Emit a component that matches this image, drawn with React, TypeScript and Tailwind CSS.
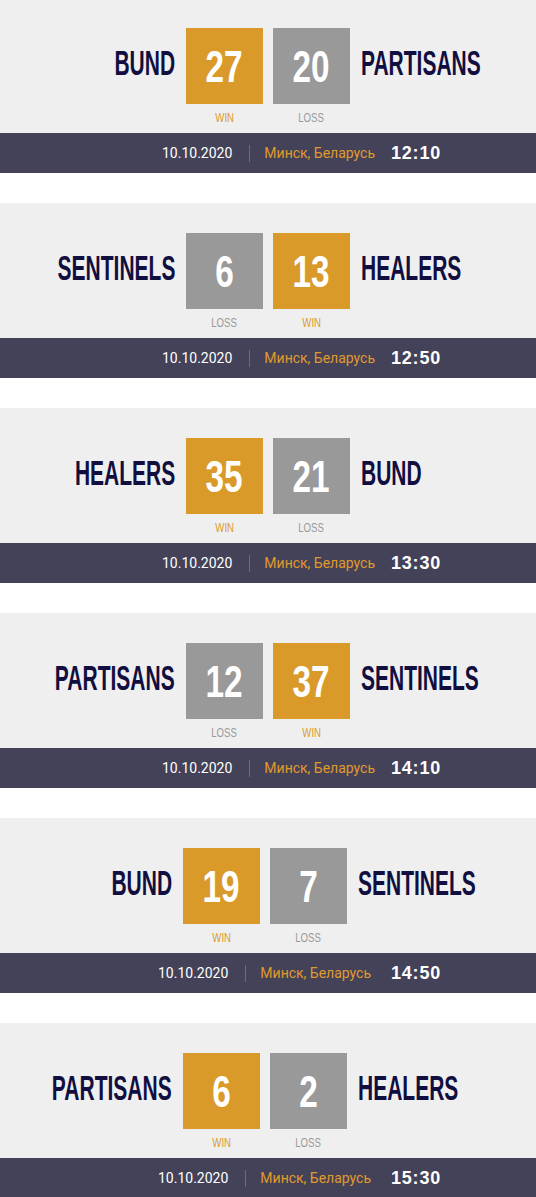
type Match = {
  left: string;
  right: string;
  leftScore: number;
  rightScore: number;
  time: string;
  shift?: boolean;
};

const matches: Match[] = [
  { left: "BUND", right: "PARTISANS", leftScore: 27, rightScore: 20, time: "12:10" },
  { left: "SENTINELS", right: "HEALERS", leftScore: 6, rightScore: 13, time: "12:50" },
  { left: "HEALERS", right: "BUND", leftScore: 35, rightScore: 21, time: "13:30" },
  { left: "PARTISANS", right: "SENTINELS", leftScore: 12, rightScore: 37, time: "14:10" },
  { left: "BUND", right: "SENTINELS", leftScore: 19, rightScore: 7, time: "14:50", shift: true },
  { left: "PARTISANS", right: "HEALERS", leftScore: 6, rightScore: 2, time: "15:30", shift: true },
];

function ScoreBox({ score, win }: { score: number; win: boolean }) {
  return (
    <div className="flex flex-col items-center">
      <div
        className={
          win
            ? "flex h-[76px] w-[77px] items-center justify-center bg-[#da9a29]"
            : "flex h-[76px] w-[77px] items-center justify-center bg-[#999999]"
        }
      >
        <span className="inline-block scale-x-[0.74] font-['Liberation_Sans',Arial,sans-serif] text-[45px] font-bold leading-none text-white">
          {score}
        </span>
      </div>
      <span
        className={
          win
            ? "mt-[8px] inline-block scale-x-[0.8] font-['Liberation_Sans',Arial,sans-serif] text-[12px] leading-none text-[#da9a29]"
            : "mt-[8px] inline-block scale-x-[0.8] font-['Liberation_Sans',Arial,sans-serif] text-[12px] leading-none text-[#999999]"
        }
      >
        {win ? "WIN" : "LOSS"}
      </span>
    </div>
  );
}

function MatchCard({ m, first }: { m: Match; first: boolean }) {
  const leftWin = m.leftScore > m.rightScore;
  return (
    <div className={first ? "mt-[-2px] mb-[30px]" : "mb-[30px]"}>
      <div className="h-[135px] bg-[#efefef] pt-[30px]">
        <div className={m.shift ? "flex items-start pr-[6px]" : "flex items-start"}>
          <div className="flex h-[76px] min-w-0 flex-1 items-center justify-end pb-[8px] pr-[11px]">
            <span className="inline-block origin-right scale-x-[0.6] font-['Liberation_Sans',Arial,sans-serif] text-[35px] font-bold leading-none whitespace-nowrap text-[#110e40]">
              {m.left}
            </span>
          </div>
          <div className="flex shrink-0 gap-[10px]">
            <ScoreBox score={m.leftScore} win={leftWin} />
            <ScoreBox score={m.rightScore} win={!leftWin} />
          </div>
          <div className="flex h-[76px] min-w-0 flex-1 items-center justify-start pb-[8px] pl-[11px]">
            <span className="inline-block origin-left scale-x-[0.6] font-['Liberation_Sans',Arial,sans-serif] text-[35px] font-bold leading-none whitespace-nowrap text-[#110e40]">
              {m.right}
            </span>
          </div>
        </div>
      </div>
      <div className="flex h-[40px] items-center bg-[#434259]">
        <div
          className={
            m.shift
              ? "flex w-[391px] shrink-0 items-center pl-[158px] font-['Roboto',sans-serif] text-[14px]"
              : "flex w-[391px] shrink-0 items-center pl-[162px] font-['Roboto',sans-serif] text-[14px]"
          }
        >
          <span className="text-white">10.10.2020</span>
          <span className="ml-[17px] h-[17px] w-px bg-[#6c6b80]" />
          <span className="ml-[14px] text-[#e09a2c]">Минск, Беларусь</span>
        </div>
        <span className="font-['Liberation_Sans',Arial,sans-serif] text-[18px] font-bold tracking-[0.8px] text-white">
          {m.time}
        </span>
      </div>
    </div>
  );
}

export default function App() {
  return (
    <div className="h-[1197px] w-full overflow-hidden bg-white">
      {matches.map((m, i) => (
        <MatchCard key={i} m={m} first={i === 0} />
      ))}
    </div>
  );
}
